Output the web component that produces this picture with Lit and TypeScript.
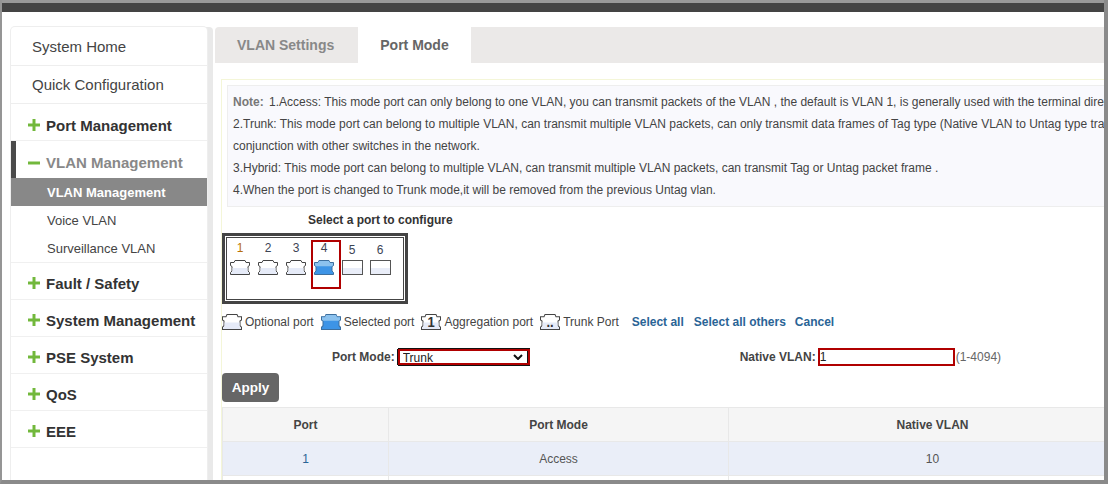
import { LitElement, html, css, svg } from 'lit';
import { customElement } from 'lit/decorators.js';

const PORT_PATH = 'M5 .5H15L16 2.5H19.5V5.5L18 6.5V11L19.5 12.5V14.5H.5V12.5L2 11V6.5L.5 5.5V2.5H4Z';

const portIcon = (kind: string, label = '') => html`
  <svg class="port-icon" width="20" height="15" viewBox="0 0 20 15" preserveAspectRatio="none">
    ${kind === 'selected'
      ? svg`<path d=${PORT_PATH} fill="#3d94e6" stroke="#3d6f9e"/>
            <path d="M5 1H15L16 3H19V5.3L17.8 6.3H2.2L1 5.3V3H4Z" fill="#8cc2ee"/>`
      : svg`<path d=${PORT_PATH} fill="#fff" stroke="#444"/>
            <path d="M2.5 8H17.5V11.2L19 12.7V14H1V12.7L2.5 11.2Z" fill="#e6ebf8"/>`}
    ${label
      ? svg`<text x="10" y="12" text-anchor="middle" font-size="13" font-weight="700" font-family="Liberation Sans" fill="#333">${label}</text>`
      : ''}
  </svg>
`;

@customElement('app-root')
export class AppRoot extends LitElement {
  static styles = css`
    :host {
      display: block;
      position: relative;
      width: 1108px;
      height: 484px;
      overflow: hidden;
      background: #fff;
      font-family: 'Liberation Sans', Arial, sans-serif;
      font-size: 12px;
      color: #333;
    }

    /* window frame sits over the page */
    .frame {
      position: absolute;
      inset: 0;
      pointer-events: none;
      border-left: 2px solid #959595;
      border-right: 4px solid #8a8a8a;
      border-bottom: 4px solid #8a8a8a;
      z-index: 5;
    }
    .titlebar {
      height: 12px;
      box-sizing: border-box;
      background: #444;
      border-top: 3px solid #999;
    }

    .page {
      display: flex;
      padding: 15px 0 0 11px;
      height: 457px;
    }

    .side {
      width: 196px;
      flex: none;
      height: 100%;
      background: #fff;
      border-radius: 4px 4px 0 0;
      box-shadow: 0 0 0 1px #eee, 6px 0 0 #e9e9e9;
    }
    .top-item {
      height: 38px;
      box-sizing: border-box;
      padding-left: 21px;
      line-height: 38px;
      font-size: 15px;
      color: #444;
      border-bottom: 1px solid #eee;
    }
    .top-item.first {
      height: 39px;
      padding-top: 1px;
    }
    .group {
      height: 37px;
      box-sizing: border-box;
      display: flex;
      align-items: center;
      gap: 6px;
      padding: 4px 0 0 17px;
      font-size: 15px;
      font-weight: 700;
      color: #333;
      border-bottom: 1px solid #f0f0f0;
    }
    .group.tall {
      padding-top: 6px;
    }
    .group.open {
      color: #888;
      border-bottom: 0;
      border-left: 5px solid #4a4a4a;
      padding-left: 12px;
    }
    .sign {
      width: 12px;
      height: 12px;
      flex: none;
    }
    .sub {
      height: 28px;
      line-height: 30px;
      padding-left: 36px;
      color: #444;
      font-size: 13px;
    }
    .sub.active {
      background: #888;
      color: #fff;
      font-weight: 700;
    }
    .sub.last {
      height: 29px;
      box-sizing: border-box;
      border-bottom: 1px solid #f0f0f0;
    }

    .main {
      flex: 1;
      min-width: 0;
      margin-left: 8px;
      overflow: hidden;
    }
    .tabs {
      display: flex;
      height: 36px;
      background: #ebe9e8;
      border-radius: 4px 0 0 0;
      font-size: 14px;
      font-weight: 700;
      color: #888;
    }
    .tab {
      line-height: 36px;
      box-sizing: border-box;
    }
    .tab.first {
      width: 143px;
      padding-left: 22px;
    }
    .tab.current {
      width: 113px;
      background: #fff;
      color: #666;
      text-align: center;
    }

    .content {
      margin-top: 16px;
      margin-left: 6px;
      border-left: 1px solid #f4f6d8;
      border-top: 1px solid #f4f6d8;
      padding: 5px 0 0 5px;
      white-space: nowrap;
    }
    .note {
      background: #f9f9fd;
      border: 1px solid #eee;
      border-right: 0;
      height: 122px;
      box-sizing: border-box;
      padding: 5px 0 0 5px;
      line-height: 22px;
      color: #444;
      overflow: hidden;
    }
    .note b {
      color: #777;
      margin-right: 2px;
    }

    .pick-title {
      margin: 6px 0 0 81px;
      font-weight: 700;
      line-height: 14px;
    }
    .panel {
      width: 186px;
      height: 71px;
      box-sizing: border-box;
      margin: 6px 0 0 -5px;
      border: 3px solid #444;
      padding: 1px;
      background: #fff;
    }
    .panel-in {
      height: 100%;
      box-sizing: border-box;
      border: 1px solid #444;
      display: flex;
    }
    .port {
      width: 28px;
      flex: none;
      display: flex;
      flex-direction: column;
      align-items: center;
      padding-top: 3px;
      text-align: center;
      line-height: 14px;
      color: #3c4454;
      box-sizing: border-box;
      position: relative;
    }
    .port.lead {
      margin-left: -1px;
    }
    .port .num {
      height: 19px;
    }
    .port.lead .num {
      color: #b8700a;
    }
    /* red marker around the port being edited */
    .port.picked::after {
      content: '';
      position: absolute;
      left: 1px;
      top: 2px;
      width: 30px;
      height: 49px;
      box-sizing: border-box;
      border: 2px solid #b00000;
    }
    .port.plain {
      padding-top: 5px;
    }
    .port.plain .num {
      height: 17px;
    }
    .plain-box {
      width: 21px;
      height: 15px;
      box-sizing: border-box;
      border: 1px solid #555;
      background: linear-gradient(#fff 55%, #e9edf8 55%);
    }
    .port-icon {
      display: block;
      flex: none;
    }

    .legend {
      display: flex;
      align-items: center;
      height: 20px;
      margin: 8px 0 0 -5px;
      color: #444;
    }
    .legend .port-icon {
      height: 16px;
    }
    .item {
      display: flex;
      align-items: center;
      gap: 3px;
    }
    .item.m7 {
      margin-left: 7px;
    }
    .link {
      color: #2a6496;
      font-weight: 700;
    }
    .link.all {
      margin-left: 13px;
    }
    .link.others {
      margin-left: 10px;
    }
    .link.cancel {
      margin-left: 9px;
    }

    .form {
      display: flex;
      align-items: center;
      height: 20px;
      margin-top: 15px;
    }
    .form label {
      font-weight: 700;
      color: #444;
    }
    .f-mode {
      margin-left: 105px;
    }
    .f-native {
      margin-left: 210px;
    }
    .select-wrap {
      position: relative;
      margin-left: 3px;
      display: flex;
    }
    select {
      appearance: none;
      width: 132px;
      height: 16px;
      box-sizing: border-box;
      border: 2px solid #b00000;
      border-radius: 0;
      font: 12px 'Liberation Sans', Arial, sans-serif;
      background: #fff;
      color: #222;
      padding: 0 0 0 3px;
      box-shadow: -1px 0 0 #111, 0 -1px 0 #111, 0 1px 0 #111, inset -1px 0 0 #111;
    }
    .chevron {
      position: absolute;
      right: 7px;
      top: 5px;
      width: 10px;
      height: 6px;
      pointer-events: none;
    }
    input {
      width: 137px;
      height: 18px;
      margin-left: 2px;
      box-sizing: border-box;
      border: 2px solid #b00000;
      font: 12px 'Liberation Sans', Arial, sans-serif;
      padding: 0;
      color: #222;
      background: #fff;
    }
    .range {
      margin-left: 1px;
      color: #666;
    }

    .apply {
      display: block;
      width: 57px;
      height: 29px;
      margin: 6px 0 0 -5px;
      padding: 0;
      border: 0;
      border-radius: 4px;
      background: #666;
      color: #fff;
      font: 700 13.5px 'Liberation Sans', Arial, sans-serif;
    }

    table {
      width: 915px;
      margin: 5px 0 0 -5px;
      table-layout: fixed;
      border-collapse: collapse;
      text-align: center;
    }
    .c-port {
      width: 166px;
    }
    .c-mode {
      width: 340px;
    }
    th,
    td {
      border: 1px solid #e8e8e8;
      padding: 0;
    }
    th {
      height: 33px;
      background: #f5f5f5;
      color: #444;
    }
    td {
      height: 33px;
      color: #555;
    }
    tr.odd td {
      background: #eaeef8;
    }
    td a {
      color: #2a6496;
    }
  `;

  render() {
    const groups = ['Fault / Safety', 'System Management', 'PSE System', 'QoS', 'EEE'];
    return html`
      <div class="frame"></div>
      <div class="titlebar"></div>
      <div class="page">
        <nav class="side">
          <div class="top-item first">System Home</div>
          <div class="top-item">Quick Configuration</div>
          <div class="group tall">${this.sign(true)}Port Management</div>
          <div class="group tall open">${this.sign(false)}VLAN Management</div>
          <div class="sub active">VLAN Management</div>
          <div class="sub">Voice VLAN</div>
          <div class="sub last">Surveillance VLAN</div>
          ${groups.map((g) => html`<div class="group">${this.sign(true)}${g}</div>`)}
        </nav>
        <section class="main">
          <div class="tabs">
            <div class="tab first">VLAN Settings</div>
            <div class="tab current">Port Mode</div>
          </div>
          <div class="content">
            <div class="note">
              <div><b>Note:</b> 1.Access: This mode port can only belong to one VLAN, you can transmit packets of the VLAN , the default is VLAN 1, is generally used with the terminal direct connection.</div>
              <div>2.Trunk: This mode port can belong to multiple VLAN, can transmit multiple VLAN packets, can only transmit data frames of Tag type (Native VLAN to Untag type transmit), generally used in</div>
              <div>conjunction with other switches in the network.</div>
              <div>3.Hybrid: This mode port can belong to multiple VLAN, can transmit multiple VLAN packets, can transmit Tag or Untag packet frame .</div>
              <div>4.When the port is changed to Trunk mode,it will be removed from the previous Untag vlan.</div>
            </div>
            <div class="pick-title">Select a port to configure</div>
            <div class="panel">
              <div class="panel-in">
                <div class="port lead"><div class="num">1</div>${portIcon('optional')}</div>
                <div class="port"><div class="num">2</div>${portIcon('optional')}</div>
                <div class="port"><div class="num">3</div>${portIcon('optional')}</div>
                <div class="port picked"><div class="num">4</div>${portIcon('selected')}</div>
                <div class="port plain"><div class="num">5</div><div class="plain-box"></div></div>
                <div class="port plain"><div class="num">6</div><div class="plain-box"></div></div>
              </div>
            </div>
            <div class="legend">
              <div class="item">${portIcon('optional')}<span>Optional port</span></div>
              <div class="item m7">${portIcon('selected')}<span>Selected port</span></div>
              <div class="item m7">${portIcon('optional', '1')}<span>Aggregation port</span></div>
              <div class="item m7">${portIcon('optional', '..')}<span>Trunk Port</span></div>
              <a class="link all">Select all</a>
              <a class="link others">Select all others</a>
              <a class="link cancel">Cancel</a>
            </div>
            <div class="form">
              <label class="f-mode">Port Mode:</label>
              <div class="select-wrap">
                <select><option>Trunk</option></select>
                <svg class="chevron" viewBox="0 0 10 6"><path d="M1 1L5 5L9 1" fill="none" stroke="#111" stroke-width="2" /></svg>
              </div>
              <label class="f-native">Native VLAN:</label>
              <input value="1" />
              <span class="range">(1-4094)</span>
            </div>
            <button class="apply">Apply</button>
            <table>
              <colgroup><col class="c-port" /><col class="c-mode" /><col /></colgroup>
              <tr><th>Port</th><th>Port Mode</th><th>Native VLAN</th></tr>
              <tr class="odd"><td><a>1</a></td><td>Access</td><td>10</td></tr>
              <tr><td></td><td></td><td></td></tr>
            </table>
          </div>
        </section>
      </div>
    `;
  }

  private sign(plus: boolean) {
    return html`<svg class="sign" viewBox="0 0 12 12">
      <path d="M0 6H12" stroke="#72b83c" stroke-width="3" />
      ${plus ? svg`<path d="M6 0V12" stroke="#72b83c" stroke-width="3" />` : ''}
    </svg>`;
  }
}
